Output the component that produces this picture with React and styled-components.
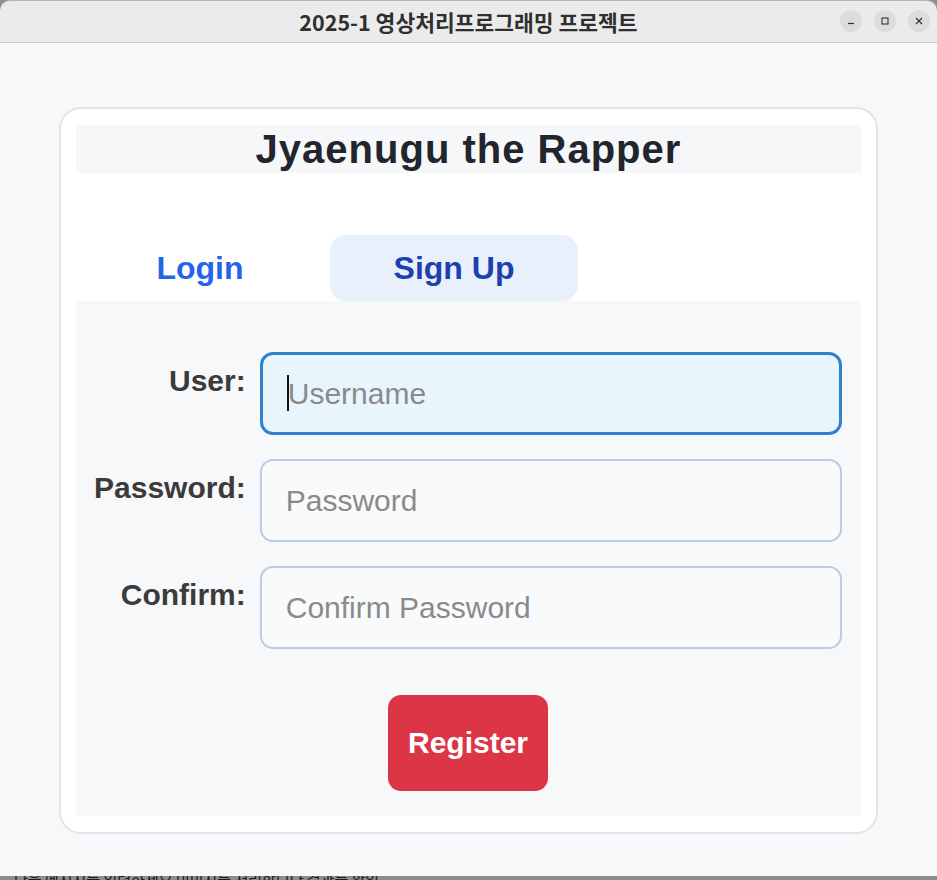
import React from "react";
import styled, { createGlobalStyle } from "styled-components";

const GlobalStyle = createGlobalStyle`
    html, body { margin:0; padding:0; }
    body {
        width:937px;
        height:880px;
        overflow:hidden;
        font-family:"Liberation Sans", Arial, sans-serif;
        background:#8f8f8f;
    }
`;

const Window = styled.div`
    display:flex;
    flex-direction:column;
    height:880px;
`;
const TitleBar = styled.div`
    flex:none;
    display:flex;
    align-items:center;
    justify-content:center;
    position:relative;
    background:#ebebeb;
    border-top:1px solid #b5b5b5;
    border-bottom:1px solid #c6c6c6;
    border-radius:10px 10px 0 0;
    box-sizing:border-box;
    height:43px;
`;
const Title = styled.div`
    font-family:"Noto Sans CJK KR", "Noto Sans", sans-serif;
    font-weight:700;
    font-size:21.5px;
    color:#2f2f2f;
`;
const Controls = styled.div`
    position:absolute;
    right:7px;
    top:9px;
    display:flex;
    gap:12px;
`;
const Ctl = styled.div`
    width:22px;
    height:22px;
    border-radius:50%;
    background:#dcdcdc;
    display:flex;
    align-items:center;
    justify-content:center;
`;
const Content = styled.div`
    flex:1;
    background:#f7f8fa;
    padding-top:64px;
    box-sizing:border-box;
`;
const Strip = styled.div`
    height:4px;
    flex:none;
    overflow:hidden;
    background:#8d8d8d;
    font-family:"Noto Sans CJK KR", sans-serif;
    font-size:15px;
    line-height:6px;
    padding-left:14px;
    color:#1a1a1a;
    white-space:nowrap;
`;
const Card = styled.div`
    width:819px;
    margin-left:59px;
    box-sizing:border-box;
    background:#ffffff;
    border:2px solid #e2e4e9;
    border-radius:22px;
    padding:16px 15px;
`;
const Header = styled.h1`
    margin:0;
    height:48px;
    background:#f6f7f9;
    text-align:center;
    font-size:40px;
    line-height:48px;
    font-weight:700;
    letter-spacing:1px;
    color:#22252d;
`;
const Tabs = styled.div`
    margin-top:62px;
    display:flex;
    gap:6px;
`;
const Tab = styled.div`
    width:248px;
    height:66px;
    border-radius:16px;
    display:flex;
    align-items:center;
    justify-content:center;
    font-size:32px;
    font-weight:700;
    color:${p => p.$active ? "#1e40af" : "#2563eb"};
    background:${p => p.$active ? "#e8f0fb" : "transparent"};
`;
const Panel = styled.div`
    background:#f7f8fa;
    padding:51px 19px 25px 18px;
    display:flex;
    flex-direction:column;
    align-items:center;
`;
const Grid = styled.div`
    align-self:stretch;
    display:grid;
    grid-template-columns:auto 1fr;
    column-gap:14px;
    row-gap:24px;
`;
const Label = styled.label`
    text-align:right;
    font-size:30px;
    font-weight:700;
    color:#3b3b3b;
    padding-top:12px;
`;
const Field = styled.div`
    position:relative;
`;
const Input = styled.input`
    display:block;
    width:100%;
    height:83px;
    box-sizing:border-box;
    border-radius:13px;
    border:${p => p.$focused ? "3px solid #3182ce" : "2px solid #b9cbe8"};
    background:${p => p.$focused ? "#e9f5fd" : "#f9fafc"};
    padding:0 0 0 ${p => p.$focused ? "25px" : "24px"};
    font-family:"Liberation Sans", Arial, sans-serif;
    font-size:30px;
    color:#333;
    outline:none;
    &::placeholder { color:#8a8a8a; }
`;
const Caret = styled.span`
    position:absolute;
    left:27px;
    top:23px;
    width:2px;
    height:36px;
    background:#111;
`;
const Button = styled.button`
    margin-top:46px;
    width:160px;
    height:96px;
    border:none;
    border-radius:13px;
    background:#dc3545;
    color:#ffffff;
    font-family:"Liberation Sans", Arial, sans-serif;
    font-size:30px;
    font-weight:700;
    cursor:pointer;
`;

const fields = [
    { label: "User:", placeholder: "Username", type: "text", focused: true },
    { label: "Password:", placeholder: "Password", type: "password" },
    { label: "Confirm:", placeholder: "Confirm Password", type: "password" },
];

export default function App() {
    return (
        <>
            <GlobalStyle />
            <Window>
                <TitleBar>
                    <Title>2025-1 영상처리프로그래밍 프로젝트</Title>
                    <Controls>
                        <Ctl>
                            <svg width="10" height="10" viewBox="0 0 10 10"><path d="M2 7.5h6" stroke="#333" strokeWidth="1.2" /></svg>
                        </Ctl>
                        <Ctl>
                            <svg width="10" height="10" viewBox="0 0 10 10"><rect x="2" y="2" width="6" height="6" fill="none" stroke="#333" strokeWidth="1.1" /></svg>
                        </Ctl>
                        <Ctl>
                            <svg width="10" height="10" viewBox="0 0 10 10"><path d="M2 2l6 6M8 2l-6 6" stroke="#333" strokeWidth="1.2" /></svg>
                        </Ctl>
                    </Controls>
                </TitleBar>
                <Content>
                    <Card>
                        <Header>Jyaenugu the Rapper</Header>
                        <Tabs>
                            <Tab>Login</Tab>
                            <Tab $active>Sign Up</Tab>
                        </Tabs>
                        <Panel>
                            <Grid>
                                {fields.map(f => (
                                    <React.Fragment key={f.label}>
                                        <Label>{f.label}</Label>
                                        <Field>
                                            <Input type={f.type} placeholder={f.placeholder} $focused={f.focused} />
                                            {f.focused && <Caret />}
                                        </Field>
                                    </React.Fragment>
                                ))}
                            </Grid>
                            <Button type="button">Register</Button>
                        </Panel>
                    </Card>
                </Content>
                <Strip>다음 메시지를 입력하세요 이미지를 처리합니다 결과를 확인</Strip>
            </Window>
        </>
    );
}
